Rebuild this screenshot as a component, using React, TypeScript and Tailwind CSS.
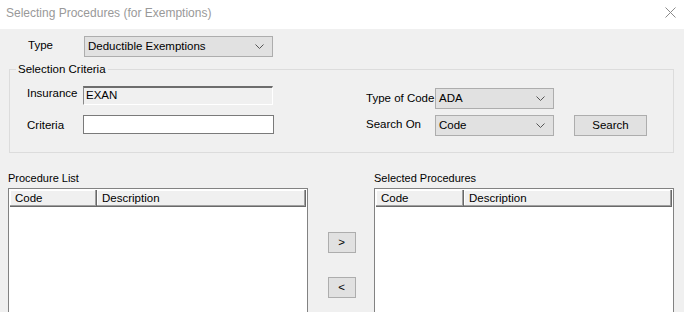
import React from "react";

function Chevron() {
  return (
    <svg width="9" height="5" viewBox="0 0 9 5" className="shrink-0">
      <path d="M0.5 0.5 L4.5 4.5 L8.5 0.5" fill="none" stroke="#555" strokeWidth="1" />
    </svg>
  );
}

function Combo({ text, w }: { text: string; w: string }) {
  return (
    <div className={`${w} h-[21px] border border-[#adadad] bg-[#e1e1e1] flex items-center justify-between pl-[3px] pr-[8px] box-border shrink-0`}>
      <span className="text-[11.5px] leading-none text-black whitespace-nowrap">{text}</span>
      <Chevron />
    </div>
  );
}

function ListPanel({ title, codeW }: { title: string; codeW: string }) {
  return (
    <div className="flex flex-col w-[300px] shrink-0">
      <div className="h-[20px] text-[11px] leading-[14px] pt-[3px] whitespace-nowrap">{title}</div>
      <div className="border border-[#828282] bg-white h-[140px] p-[1px] box-border">
        <div className="flex h-[17px]">
          <div className={`${codeW} h-full bg-[#f0f0f0] border-r border-b border-[#696969] shadow-[inset_-1px_-1px_0_#a0a0a0,inset_1px_1px_0_#ffffff] pl-[5px] text-[11.5px] leading-[16px]`}>
            Code
          </div>
          <div className="flex-1 h-full bg-[#f0f0f0] border-r border-b border-[#696969] shadow-[inset_-1px_-1px_0_#a0a0a0,inset_1px_1px_0_#ffffff] pl-[5px] text-[11.5px] leading-[16px]">
            Description
          </div>
        </div>
      </div>
    </div>
  );
}

function SmallBtn({ label }: { label: string }) {
  return (
    <div className="w-[28px] h-[21px] border border-[#adadad] bg-[#e1e1e1] flex items-center justify-center text-[11.5px] leading-none box-border">
      {label}
    </div>
  );
}

export default function App() {
  return (
    <div
      className="w-[684px] h-[312px] overflow-hidden bg-[#f0f0f0] text-black"
      style={{ fontFamily: '"Liberation Sans", Arial, sans-serif' }}
    >
      {/* Title bar */}
      <div className="h-[29px] bg-white flex items-center justify-between pl-[6px] pr-[8px]">
        <span className="text-[12px] text-[#999999] leading-none pb-[3px] whitespace-nowrap">Selecting Procedures (for Exemptions)</span>
        <svg width="11" height="11" viewBox="0 0 11 11" className="mb-[4px]">
          <path d="M0.5 0.5 L10.5 10.5 M10.5 0.5 L0.5 10.5" stroke="#8a8a8a" strokeWidth="1" />
        </svg>
      </div>

      {/* Type row */}
      <div className="flex items-start mt-[7px] pl-[28px] h-[21px]">
        <div className="w-[56px] text-[11.5px] leading-[14px] pt-[2px]">Type</div>
        <Combo text="Deductible Exemptions" w="w-[189px]" />
      </div>

      {/* Selection criteria group */}
      <div className="relative ml-[9px] mr-[10px] mt-[12px] h-[84px] border border-[#dcdcdc] flex">
        <div className="absolute left-[6px] top-[-8px] bg-[#f0f0f0] px-[2px] text-[11.5px] leading-[14px] whitespace-nowrap">Selection Criteria</div>
        <div className="flex flex-col pl-[17px] pt-[16px] shrink-0">
          <div className="flex items-center h-[19px]">
            <div className="w-[56px] text-[11.5px] leading-none pb-[4px]">Insurance</div>
            <div className="w-[190px] h-[19px] border-t-2 border-l border-t-[#6d6d6d] border-l-[#8a8a8a] border-r border-b border-r-white border-b-white bg-[#f0f0f0] flex items-center pl-[2px] text-[11.5px] leading-none box-border">
              EXAN
            </div>
          </div>
          <div className="flex items-center h-[19px] mt-[10px]">
            <div className="w-[56px] text-[11.5px] leading-none pt-[2px]">Criteria</div>
            <div className="w-[191px] h-[19px] border border-[#7a7a7a] bg-white box-border" />
          </div>
        </div>
        <div className="flex flex-col ml-[92px] pt-[18px] shrink-0">
          <div className="flex items-center h-[21px]">
            <div className="w-[69px] text-[11.5px] leading-none pt-[1px] whitespace-nowrap">Type of Code</div>
            <Combo text="ADA" w="w-[119px]" />
          </div>
          <div className="flex items-center h-[21px] mt-[6px]">
            <div className="w-[69px] text-[11.5px] leading-none pb-[2px] whitespace-nowrap">Search On</div>
            <Combo text="Code" w="w-[119px]" />
            <div className="ml-[20px] w-[73px] h-[21px] border border-[#adadad] bg-[#e1e1e1] flex items-center justify-center text-[11.5px] leading-none box-border shrink-0">
              Search
            </div>
          </div>
        </div>
      </div>

      {/* Lists */}
      <div className="flex mt-[15px] pl-[8px]">
        <ListPanel title="Procedure List" codeW="w-[87px]" />
        <div className="w-[66px] flex flex-col items-center pt-[64px] pl-[1px] shrink-0">
          <SmallBtn label=">" />
          <div className="h-[24px]" />
          <SmallBtn label="<" />
        </div>
        <ListPanel title="Selected Procedures" codeW="w-[88px]" />
      </div>
    </div>
  );
}
